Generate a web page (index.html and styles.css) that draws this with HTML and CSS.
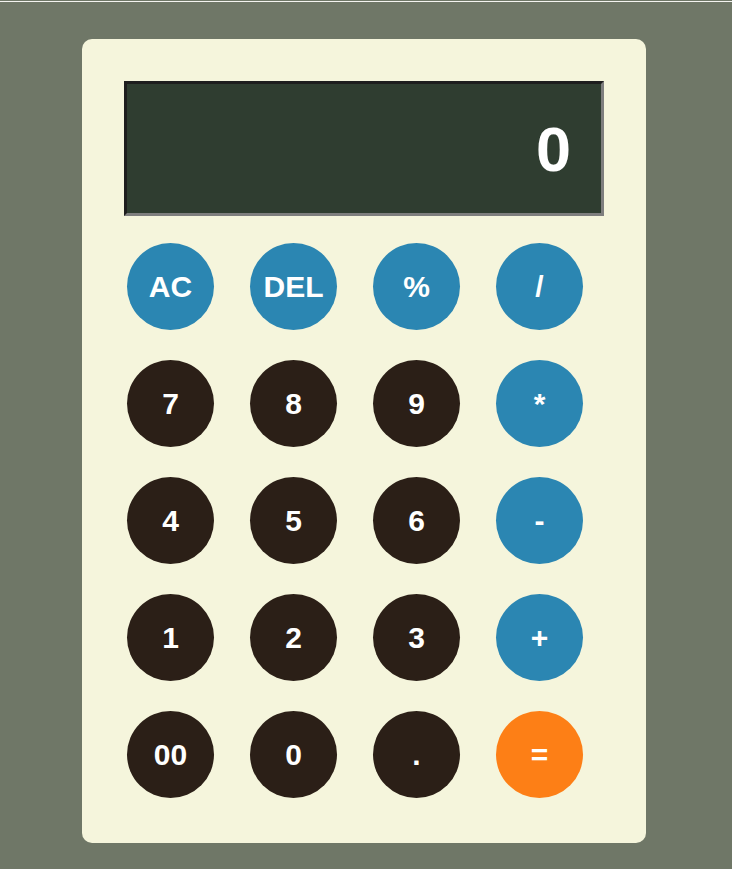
FILE: index.html
```html
<!DOCTYPE html>
<html>
<head>
<meta charset="utf-8">
<link rel="stylesheet" href="styles.css">
</head>
<body>
<div class="topline"></div>
<div class="page">
  <div class="calc">
    <div class="display">0</div>
    <div class="keys">
      <div class="row">
        <button class="key op">AC</button>
        <button class="key op">DEL</button>
        <button class="key op">%</button>
        <button class="key op">/</button>
      </div>
      <div class="row">
        <button class="key num">7</button>
        <button class="key num">8</button>
        <button class="key num">9</button>
        <button class="key op">*</button>
      </div>
      <div class="row">
        <button class="key num">4</button>
        <button class="key num">5</button>
        <button class="key num">6</button>
        <button class="key op">-</button>
      </div>
      <div class="row">
        <button class="key num">1</button>
        <button class="key num">2</button>
        <button class="key num">3</button>
        <button class="key op">+</button>
      </div>
      <div class="row">
        <button class="key num">00</button>
        <button class="key num">0</button>
        <button class="key num">.</button>
        <button class="key eq">=</button>
      </div>
    </div>
  </div>
</div>
</body>
</html>
```

FILE: styles.css
```css
html, body {
  margin: 0;
  padding: 0;
  background: #6f7767;
  font-family: "Liberation Sans", Arial, sans-serif;
}
.topline {
  height: 1px;
  margin-top: 1px;
  background: #f4f4f0;
}
.page {
  display: flex;
  padding-top: 37px;
  padding-left: 82px;
}
.calc {
  width: 480px;
  height: 720px;
  background: #f5f5dc;
  border-radius: 10px;
  padding: 42px;
}
.display {
  height: 129px;
  background: #2f3d30;
  border-style: solid;
  border-width: 3px;
  border-color: #1e1e1e #7e7e7e #7e7e7e #1e1e1e;
  color: #ffffff;
  font-weight: bold;
  font-size: 63px;
  display: flex;
  align-items: center;
  justify-content: flex-end;
  padding-right: 30px;
}
.keys {
  display: flex;
  flex-direction: column;
  gap: 30px;
  margin-top: 27px;
  padding-left: 3px;
}
.row {
  display: flex;
  gap: 36px;
}
.key {
  width: 87px;
  height: 87px;
  border: none;
  border-radius: 50%;
  padding: 0;
  color: #ffffff;
  font-family: "Liberation Sans", Arial, sans-serif;
  font-weight: bold;
  font-size: 30px;
  display: flex;
  align-items: center;
  justify-content: center;
}
.op { background: #2b86b2; }
.num { background: #2b1f17; }
.eq { background: #fd7f16; }
```
